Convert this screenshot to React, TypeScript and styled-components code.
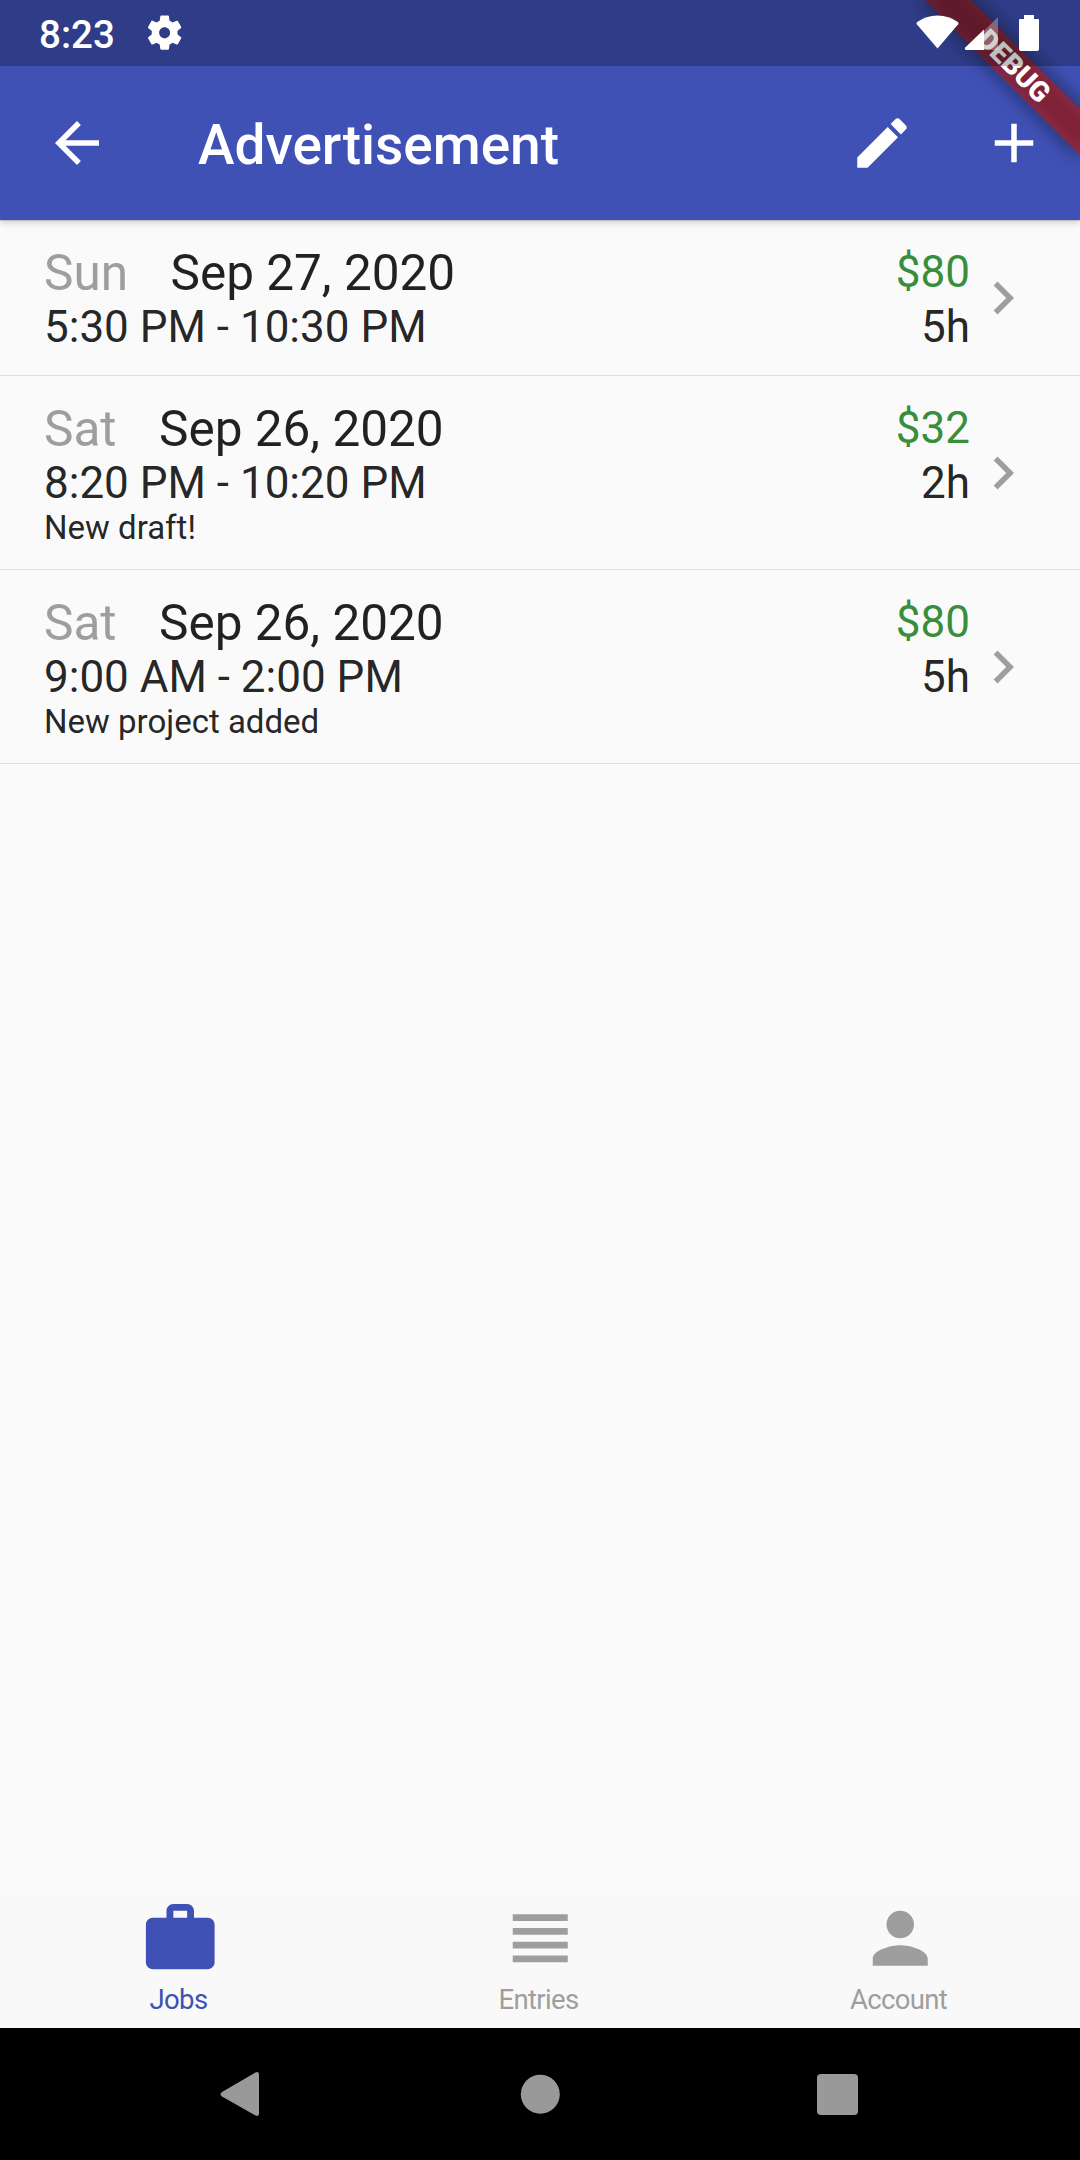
import React from "react";
import styled, { createGlobalStyle } from "styled-components";

const Global = createGlobalStyle`
  body { margin: 0; background: #000; }
  * { box-sizing: border-box; }
`;

const Screen = styled.div`
  position: relative;
  display: flex;
  flex-direction: column;
  width: 1080px;
  height: 2160px;
  overflow: hidden;
  background: #fafafa;
  color: rgba(0, 0, 0, 0.87);
  font-family: Roboto, "Noto Sans", sans-serif;
`;

const StatusBar = styled.div`
  position: absolute;
  inset: 0 0 auto 0;
  z-index: 3;
  display: flex;
  align-items: center;
  justify-content: space-between;
  height: 66px;
  padding: 0 34px 0 39px;
  background: rgba(0, 0, 0, 0.25);
  color: #fff;
`;

const StatusGroup = styled.div`
  display: flex;
  align-items: center;
`;

const Clock = styled.span`
  margin-right: 29px;
  font-size: 38.5px;
  font-weight: 500;
  line-height: 66px;
  padding-top: 3px;
`;

const AppBar = styled.header`
  position: relative;
  z-index: 1;
  flex: none;
  display: flex;
  align-items: center;
  height: 220px;
  padding: 66px 0 0 11px;
  background: #3f51b5;
  color: #fff;
  box-shadow: 0 3px 7px rgba(0, 0, 0, 0.15), 0 1px 3px rgba(0, 0, 0, 0.08);
`;

const IconButton = styled.button`
  display: grid;
  place-items: center;
  width: 132px;
  height: 132px;
  padding: 0;
  border: 0;
  background: none;
  color: inherit;
`;

const Title = styled.h1`
  flex: 1;
  margin: 0 0 0 55px;
  padding-top: 4px;
  font-size: 55px;
  font-weight: 500;
  line-height: 64px;
`;

const Ribbon = styled.div`
  position: absolute;
  z-index: 2;
  top: 0;
  left: 1080px;
  width: 0;
  height: 0;
  transform: rotate(45deg);
  transform-origin: 0 0;
`;

const RibbonShade = styled.div`
  position: absolute;
  top: 77px;
  left: -110px;
  width: 220px;
  height: 33px;
  background: rgba(0, 0, 0, 0.5);
  filter: blur(10.9px);
`;

const RibbonLabel = styled.div`
  position: absolute;
  top: 77px;
  left: -110px;
  width: 220px;
  height: 33px;
  background: rgba(183, 28, 28, 0.627);
  color: #fff;
  font-size: 28.05px;
  font-weight: 900;
  line-height: 33px;
  text-align: center;
`;

const EntryList = styled.main`
  flex: 1;
  border-top: 1px solid #e0e0e0;
`;

const Entry = styled.article<{ $noted: boolean }>`
  display: flex;
  align-items: center;
  padding: ${(p) => (p.$noted ? 23 : 22)}px 44px 22px;
  border-bottom: 1px solid #e0e0e0;
`;

const EntryBody = styled.div`
  flex: 1;
`;

const Line = styled.div`
  display: flex;
  align-items: center;
  justify-content: space-between;
`;

const DateText = styled.div`
  display: flex;
  gap: 42.5px;
  height: 58px;
  font-size: 49.5px;
  line-height: 60px;
`;

const Day = styled.span`
  color: #9e9e9e;
`;

const Value = styled.span<{ $money?: boolean }>`
  font-size: 44px;
  line-height: 52px;
  color: ${(p) => (p.$money ? "#388e3c" : "inherit")};
`;

const Note = styled.div`
  font-size: 33px;
  line-height: 38px;
`;

const TabBar = styled.nav`
  display: grid;
  grid-template-columns: repeat(3, 1fr);
  height: 137px;
  background: #f9f9f9;
`;

const Tab = styled.div<{ $active?: boolean }>`
  display: flex;
  flex-direction: column;
  align-items: center;
  padding-top: 5.5px;
  color: ${(p) => (p.$active ? "#3f51b5" : "#9e9e9e")};
`;

const TabLabel = styled.span`
  margin-top: 4.5px;
  padding-right: 3px;
  font-size: 27.5px;
  line-height: 32px;
  letter-spacing: -0.66px;
`;

const SystemNav = styled.footer`
  display: flex;
  align-items: center;
  justify-content: center;
  gap: 232px;
  height: 132px;
  background: #000;
  color: #999;
`;

const Glyph = styled.svg<{ $size?: number; $tone?: string }>`
  display: block;
  flex: none;
  width: ${(p) => p.$size ?? 66}px;
  height: ${(p) => p.$size ?? 66}px;
  fill: currentColor;
  color: ${(p) => p.$tone ?? "inherit"};
`;

const RadioIcons = styled.svg`
  display: block;
  width: 130px;
  height: 66px;
  fill: currentColor;
`;

const paths = {
  back: "M20 11H7.83l5.59-5.59L12 4l-8 8 8 8 1.41-1.41L7.83 13H20v-2z",
  edit: "M3 17.25V21h3.75L17.81 9.94l-3.75-3.75L3 17.25zM20.71 7.04c.39-.39.39-1.02 0-1.41l-2.34-2.34c-.39-.39-1.02-.39-1.41 0l-1.83 1.83 3.75 3.75 1.83-1.83z",
  add: "M19 13h-6v6h-2v-6H5v-2h6V5h2v6h6v2z",
  chevron: "M10 6L8.59 7.41 13.17 12l-4.58 4.59L10 18l6-6z",
  work: "M20 6h-4V4c0-1.11-.89-2-2-2h-4c-1.11 0-2 .89-2 2v2H4c-1.11 0-1.99.89-1.99 2L2 19c0 1.11.89 2 2 2h16c1.11 0 2-.89 2-2V8c0-1.11-.89-2-2-2zm-6 0h-4V4h4v2z",
  headline: "M4 15h16v-2H4v2zm0 4h16v-2H4v2zm0-8h16V9H4v2zm0-6v2h16V5H4z",
  person: "M12 12c2.21 0 4-1.79 4-4s-1.79-4-4-4-4 1.79-4 4 1.79 4 4 4zm0 2c-2.67 0-8 1.34-8 4v2h16v-2c0-2.66-5.33-4-8-4z",
  settings: "M19.43 12.98c.04-.32.07-.64.07-.98s-.03-.66-.07-.98l2.11-1.65c.19-.15.24-.42.12-.64l-2-3.46c-.12-.22-.39-.3-.61-.22l-2.49 1c-.52-.4-1.08-.73-1.69-.98l-.38-2.65C14.46 2.18 14.25 2 14 2h-4c-.25 0-.46.18-.49.42l-.38 2.65c-.61.25-1.17.59-1.69.98l-2.49-1c-.23-.09-.49 0-.61.22l-2 3.46c-.13.22-.07.49.12.64l2.11 1.65c-.04.32-.07.65-.07.98s.03.66.07.98l-2.11 1.65c-.19.15-.24.42-.12.64l2 3.46c.12.22.39.3.61.22l2.49-1c.52.4 1.08.73 1.69.98l.38 2.65c.03.24.24.42.49.42h4c.25 0 .46-.18.49-.42l.38-2.65c.61-.25 1.17-.59 1.69-.98l2.49 1c.23.09.49 0 .61-.22l2-3.46c.12-.22.07-.49-.12-.64l-2.11-1.65zM12 15.2c-1.77 0-3.2-1.43-3.2-3.2s1.43-3.2 3.2-3.2 3.2 1.43 3.2 3.2-1.43 3.2-3.2 3.2z",
};

type IconProps = { name: keyof typeof paths; size?: number; tone?: string };

const Icon = ({ name, size, tone }: IconProps) => (
  <Glyph viewBox="0 0 24 24" $size={size} $tone={tone}>
    <path d={paths[name]} />
  </Glyph>
);

const entries = [
  { day: "Sun", date: "Sep 27, 2020", pay: "$80", time: "5:30 PM - 10:30 PM", hours: "5h", note: "" },
  { day: "Sat", date: "Sep 26, 2020", pay: "$32", time: "8:20 PM - 10:20 PM", hours: "2h", note: "New draft!" },
  { day: "Sat", date: "Sep 26, 2020", pay: "$80", time: "9:00 AM - 2:00 PM", hours: "5h", note: "New project added" },
];

const tabs: { icon: keyof typeof paths; label: string }[] = [
  { icon: "work", label: "Jobs" },
  { icon: "headline", label: "Entries" },
  { icon: "person", label: "Account" },
];

export default function App() {
  return (
    <Screen>
      <Global />
      <StatusBar>
        <StatusGroup>
          <Clock>8:23</Clock>
          <Icon name="settings" size={41.25} />
        </StatusGroup>
        <RadioIcons viewBox="916 0 130 66">
          <path d="M937.5 48.5 L916.8 24.2 Q916 23 917.2 22 Q926 15.4 937.5 15.4 Q949 15.4 957.8 22 Q959 23 958.2 24.2 Z" />
          <path d="M998 17v33h-14V30.700z" opacity="0.3" />
          <path d="M984 29.500V50H965.500Q964 48.700 965.500 47.200z" />
          <path d="M1024 19v-4h10v4h4q1 0 1 1v29q0 2-2 2h-16q-2 0-2-2V20q0-1 1-1z" />
        </RadioIcons>
      </StatusBar>
      <AppBar>
        <IconButton aria-label="Back"><Icon name="back" /></IconButton>
        <Title>Advertisement</Title>
        <IconButton aria-label="Edit"><Icon name="edit" /></IconButton>
        <IconButton aria-label="Add"><Icon name="add" /></IconButton>
      </AppBar>
      <Ribbon>
        <RibbonShade />
        <RibbonLabel>DEBUG</RibbonLabel>
      </Ribbon>
      <EntryList>
        {entries.map((e) => (
          <Entry key={e.day + e.time} $noted={e.note !== ""}>
            <EntryBody>
              <Line>
                <DateText><Day>{e.day}</Day><span>{e.date}</span></DateText>
                <Value $money>{e.pay}</Value>
              </Line>
              <Line>
                <Value>{e.time}</Value>
                <Value>{e.hours}</Value>
              </Line>
              {e.note && <Note>{e.note}</Note>}
            </EntryBody>
            <Icon name="chevron" tone="#9e9e9e" />
          </Entry>
        ))}
      </EntryList>
      <TabBar>
        {tabs.map((t, i) => (
          <Tab key={t.label} $active={i === 0}>
            <Icon name={t.icon} size={82.5} />
            <TabLabel>{t.label}</TabLabel>
          </Tab>
        ))}
      </TabBar>
      <SystemNav>
        <Glyph viewBox="0 0 66 66">
          <path d="M50 14v38q0 4-3.500 2.500L13 35.500q-3-2.200 0-4.500L46.500 11.500Q50 10 50 14z" />
        </Glyph>
        <Glyph viewBox="0 0 66 66"><circle cx="33.300" cy="33.300" r="19.500" /></Glyph>
        <Glyph viewBox="0 0 66 66"><rect x="12" y="13" width="41" height="41" rx="4" /></Glyph>
      </SystemNav>
    </Screen>
  );
}
